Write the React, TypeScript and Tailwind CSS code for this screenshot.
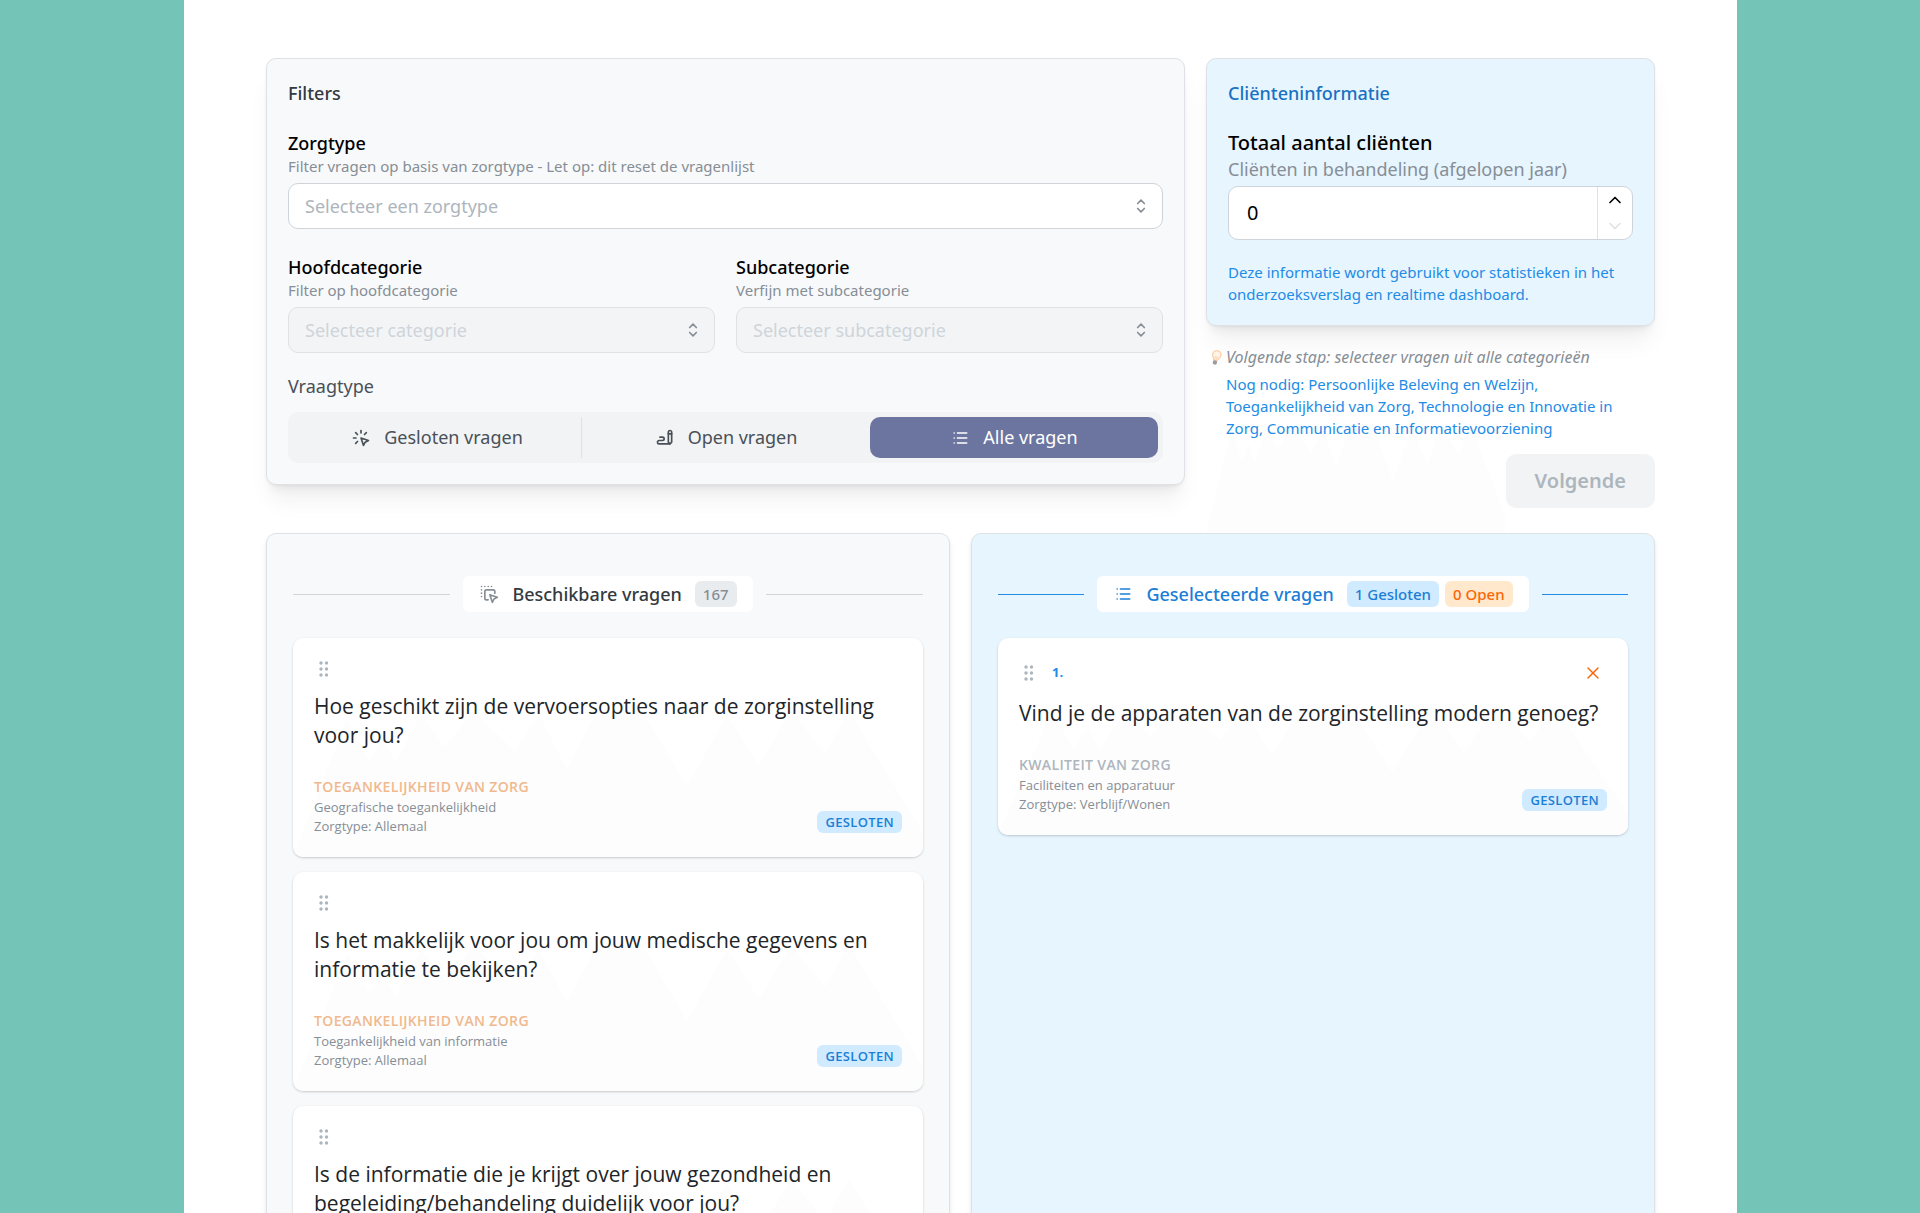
import React from "react";
import {
  TbChevronDown,
  TbChevronUp,
  TbClick,
  TbDragDrop,
  TbList,
  TbSelector,
  TbWriting,
  TbX,
} from "react-icons/tb";

interface Question {
  title: string;
  category: string;
  sub: string;
  careType: string;
}

const available: Question[] = [
  {
    title: "Hoe geschikt zijn de vervoersopties naar de zorginstelling voor jou?",
    category: "Toegankelijkheid van zorg",
    sub: "Geografische toegankelijkheid",
    careType: "Allemaal",
  },
  {
    title: "Is het makkelijk voor jou om jouw medische gegevens en informatie te bekijken?",
    category: "Toegankelijkheid van zorg",
    sub: "Toegankelijkheid van informatie",
    careType: "Allemaal",
  },
  {
    title: "Is de informatie die je krijgt over jouw gezondheid en begeleiding/behandeling duidelijk voor jou?",
    category: "Toegankelijkheid van zorg",
    sub: "Toegankelijkheid van informatie",
    careType: "Allemaal",
  },
];

const selected: Question[] = [
  {
    title: "Vind je de apparaten van de zorginstelling modern genoeg?",
    category: "Kwaliteit van zorg",
    sub: "Faciliteiten en apparatuur",
    careType: "Verblijf/Wonen",
  },
];

const panelShadow =
  "shadow-[0_1px_3px_rgba(0,0,0,0.05),0_20px_25px_-5px_rgba(0,0,0,0.06),0_10px_10px_-5px_rgba(0,0,0,0.05)]";

// Faint mountain ridge behind cards
function Peaks({ className }: { className: string }) {
  return (
    <svg viewBox="0 0 630 146" preserveAspectRatio="none" aria-hidden="true" className={className}>
      <path
        fill="#fdfdfd"
        d="M0 146 L54 8 L76 50 L90 26 L102 52 L128 4 L152 36 L180 0 L222 40 L246 4 L274 58 L304 0 L350 0 L394 76 L434 4 L466 54 L498 0 L532 42 L556 0 L630 122 V146 Z"
      />
    </svg>
  );
}

function GripDots() {
  return (
    <svg viewBox="0 0 10 16" className="h-4 w-[10px] fill-[#adb5bd]" aria-hidden="true">
      {[2, 8, 14].map((y) => (
        <g key={y}>
          <circle cx="2" cy={y} r="1.7" />
          <circle cx="7.5" cy={y} r="1.7" />
        </g>
      ))}
    </svg>
  );
}

function Bulb() {
  return (
    <svg viewBox="0 0 12 16" fill="none" className="mt-1 ml-1 h-4 w-3 shrink-0" aria-hidden="true">
      <g transform="rotate(14 6 8)">
        <path
          d="M4.2 10.2 C4.2 8.4 1.8 7.4 1.8 4.8 A4.2 4.2 0 0 1 10.2 4.8 C10.2 7.4 7.8 8.4 7.8 10.2 Z"
          fill="#fff4e6"
          stroke="#fdd0a8"
          strokeWidth="1.3"
        />
        <path d="M5 9.5 V6.5 L6 7.3 L7 6.5 V9.5" stroke="#fdd0a8" strokeWidth="0.8" />
        <rect x="4" y="10.6" width="4" height="4" rx="1.2" fill="#9a9a9f" />
      </g>
    </svg>
  );
}

interface SelectFieldProps {
  id: string;
  label: string;
  hint: string;
  placeholder: string;
  disabled?: boolean;
}

function SelectField({ id, label, hint, placeholder, disabled }: SelectFieldProps) {
  return (
    <div className="min-w-0 flex-1">
      <label htmlFor={id} className="block text-[18px] leading-[26px] font-medium text-black">
        {label}
      </label>
      <p className="mb-[6px] text-[15px] leading-[21px] text-[#868e96]">{hint}</p>
      <div className="relative">
        <select
          id={id}
          disabled={disabled}
          defaultValue=""
          className={`block h-[46px] w-full appearance-none rounded-[10px] border px-4 text-[18px] opacity-100 ${
            disabled ? "border-[#dee2e6] bg-[#f3f4f6] text-[#ced4da]" : "border-[#ced4da] bg-white text-[#adb5bd]"
          }`}
        >
          <option value="">{placeholder}</option>
        </select>
        <TbSelector className="pointer-events-none absolute top-[13px] right-3 h-5 w-5 text-[#868e96]" />
      </div>
    </div>
  );
}

function QuestionCard({ question, index }: { question: Question; index?: number }) {
  const isSelected = index !== undefined;

  return (
    <article className="relative overflow-hidden rounded-[10px] bg-white px-[21px] pt-[21px] pb-[21px] font-['Open_Sans',sans-serif] shadow-[0_1px_3px_rgba(0,0,0,0.1),0_1px_2px_rgba(0,0,0,0.1)]">
      <Peaks className="absolute inset-x-0 bottom-0 h-2/3 w-full" />
      <div className="relative">
        <div className={`flex items-center gap-[18px] pl-[5px] ${isSelected ? "h-[27px]" : "h-5"}`}>
          <GripDots />
          {isSelected && (
            <>
              <span className="text-[13px] font-bold text-[#228be6]">{index}.</span>
              <button aria-label="Verwijder vraag" className="mr-1 ml-auto text-[#f76707]">
                <TbX className="h-5 w-5 stroke-[1.7]" />
              </button>
            </>
          )}
        </div>
        <h3 className="mt-[13px] text-[21px] leading-[29px] font-medium text-[#212529]">{question.title}</h3>
        <div className="mt-[26px] flex items-end justify-between">
          <div className="text-[13px] leading-[19px] text-[#868e96]">
            <p
              className={`text-[14px] leading-[22px] font-semibold tracking-wide uppercase ${
                isSelected ? "text-[#adb5bd]" : "text-[#f0b98d]"
              }`}
            >
              {question.category}
            </p>
            <p>{question.sub}</p>
            <p>Zorgtype: {question.careType}</p>
          </div>
          <span className="mb-[3px] rounded-md bg-[#d0ebff] px-2 text-[13px] leading-[22px] font-semibold tracking-wide text-[#1c7ed6]">
            GESLOTEN
          </span>
        </div>
      </div>
    </article>
  );
}

export default function App() {
  return (
    <div className="min-h-screen bg-[#74c4b8] pr-[183px] pl-[184px] font-['Noto_Sans',sans-serif]">
      <main className="min-h-screen bg-white px-[82px] pt-[58px] pb-14">
        <div className="grid grid-cols-12 items-start gap-[21px]">
          <section className={`col-span-8 rounded-[10px] border border-[#dee2e6] bg-[#f8f9fb] p-[21px] ${panelShadow}`}>
            <h2 className="text-[18px] leading-[26px] font-medium text-[#343a40]">Filters</h2>
            <div className="mt-6">
              <SelectField
                id="zorgtype"
                label="Zorgtype"
                hint="Filter vragen op basis van zorgtype - Let op: dit reset de vragenlijst"
                placeholder="Selecteer een zorgtype"
              />
            </div>
            <div className="mt-[25px] flex gap-[21px]">
              <SelectField
                id="hoofdcategorie"
                label="Hoofdcategorie"
                hint="Filter op hoofdcategorie"
                placeholder="Selecteer categorie"
                disabled
              />
              <SelectField
                id="subcategorie"
                label="Subcategorie"
                hint="Verfijn met subcategorie"
                placeholder="Selecteer subcategorie"
                disabled
              />
            </div>
            <p className="mt-5 text-[18px] leading-[27px] text-[#495057]">Vraagtype</p>
            <div className="mt-3 flex rounded-[10px] bg-[#f1f3f5] p-[5px] text-[18px] text-[#495057]">
              <button className="flex h-[41px] flex-1 items-center justify-center gap-[13px] border-r border-[#dee2e6]">
                <TbClick className="h-5 w-5" /> Gesloten vragen
              </button>
              <button className="flex h-[41px] flex-1 items-center justify-center gap-[13px]">
                <TbWriting className="h-5 w-5" /> Open vragen
              </button>
              <button className="flex h-[41px] flex-1 items-center justify-center gap-[13px] rounded-[10px] bg-[#6c75a0] text-white">
                <TbList className="h-5 w-5" /> Alle vragen
              </button>
            </div>
          </section>

          <aside className="relative col-span-4">
            <Peaks className="absolute -bottom-[26px] left-0 h-[110px] w-2/3" />
            <section
              className={`relative rounded-[10px] border border-[#dee2e6] bg-[#e7f5ff] px-[21px] pt-[21px] pb-5 ${panelShadow}`}
            >
              <h2 className="text-[18px] leading-[26px] font-medium text-[#1971c2]">Cliënteninformatie</h2>
              <label htmlFor="clienten" className="mt-[22px] block text-[20px] leading-[30px] font-medium text-black">
                Totaal aantal cliënten
              </label>
              <p className="text-[18px] leading-[22px] text-[#868e96]">Cliënten in behandeling (afgelopen jaar)</p>
              <div className="mt-[6px] flex h-[54px] overflow-hidden rounded-[10px] border border-[#ced4da] bg-white">
                <input
                  id="clienten"
                  type="text"
                  inputMode="numeric"
                  defaultValue="0"
                  className="min-w-0 flex-1 px-[18px] text-[20px] text-black outline-none"
                />
                <div className="flex w-[35px] flex-col border-l border-[#dee2e6]">
                  <button aria-label="Verhoog" className="flex flex-1 items-center justify-center text-black">
                    <TbChevronUp className="h-5 w-5" />
                  </button>
                  <button aria-label="Verlaag" disabled className="flex flex-1 items-center justify-center text-[#dee2e6]">
                    <TbChevronDown className="h-5 w-5" />
                  </button>
                </div>
              </div>
              <p className="mt-[21px] text-[15px] leading-[22px] text-[#228be6]">
                Deze informatie wordt gebruikt voor statistieken in het onderzoeksverslag en realtime dashboard.
              </p>
            </section>
            <div className="relative mt-5 flex gap-1 pr-5 text-[15px] leading-[22px]">
              <Bulb />
              <div className="flex-1">
                <p className="text-[16px] text-[#868e96] italic">Volgende stap: selecteer vragen uit alle categorieën</p>
                <p className="mt-[5px] text-[#228be6]">
                  Nog nodig: Persoonlijke Beleving en Welzijn, Toegankelijkheid van Zorg, Technologie en Innovatie in Zorg,
                  Communicatie en Informatievoorziening
                </p>
              </div>
            </div>
            <button
              disabled
              className="relative mt-[15px] ml-auto block h-[54px] rounded-[10px] bg-[#f1f3f5] px-[29px] text-[20px] font-semibold text-[#adb5bd]"
            >
              Volgende
            </button>
          </aside>
        </div>

        <div className="relative mt-[25px] grid grid-cols-2 gap-[21px]">
          <section className="rounded-[10px] border border-[#dee2e6] bg-[#f8f9fb] px-[26px] pt-[42px] pb-[26px] shadow-md">
            <header className="flex items-center gap-[13px]">
              <span className="h-px flex-1 bg-[#ced4da]" />
              <div className="flex h-9 items-center rounded-md bg-white px-4">
                <TbDragDrop className="h-5 w-5 text-[#868e96]" />
                <h2 className="ml-[13px] text-[18px] font-medium text-[#343a40]">Beschikbare vragen</h2>
                <span className="ml-[13px] rounded-md bg-[#e9ecef] px-2 text-[15px] leading-[26px] font-medium text-[#868e96]">
                  167
                </span>
              </div>
              <span className="h-px flex-1 bg-[#ced4da]" />
            </header>
            <div className="mt-[26px] space-y-[15px]">
              {available.map((q) => (
                <QuestionCard key={q.title} question={q} />
              ))}
            </div>
          </section>
          <section className="rounded-[10px] border border-[#dee2e6] bg-[#e7f5ff] px-[26px] pt-[42px] pb-[26px] shadow-md">
            <header className="flex items-center gap-[13px]">
              <span className="h-px flex-1 bg-[#228be6]" />
              <div className="flex h-9 items-center rounded-md bg-white px-4">
                <TbList className="h-5 w-5 text-[#1c7ed6]" />
                <h2 className="ml-[13px] text-[18px] font-medium text-[#1c7ed6]">Geselecteerde vragen</h2>
                <span className="ml-[13px] rounded-md bg-[#d0ebff] px-2 text-[15px] leading-[26px] font-medium text-[#1c7ed6]">
                  1 Gesloten
                </span>
                <span className="ml-[6px] rounded-md bg-[#ffe8cc] px-2 text-[15px] leading-[26px] font-medium text-[#f76707]">
                  0 Open
                </span>
              </div>
              <span className="h-px flex-1 bg-[#228be6]" />
            </header>
            <div className="mt-[26px] space-y-[15px]">
              {selected.map((q, i) => (
                <QuestionCard key={q.title} question={q} index={i + 1} />
              ))}
            </div>
          </section>
        </div>
      </main>
    </div>
  );
}
